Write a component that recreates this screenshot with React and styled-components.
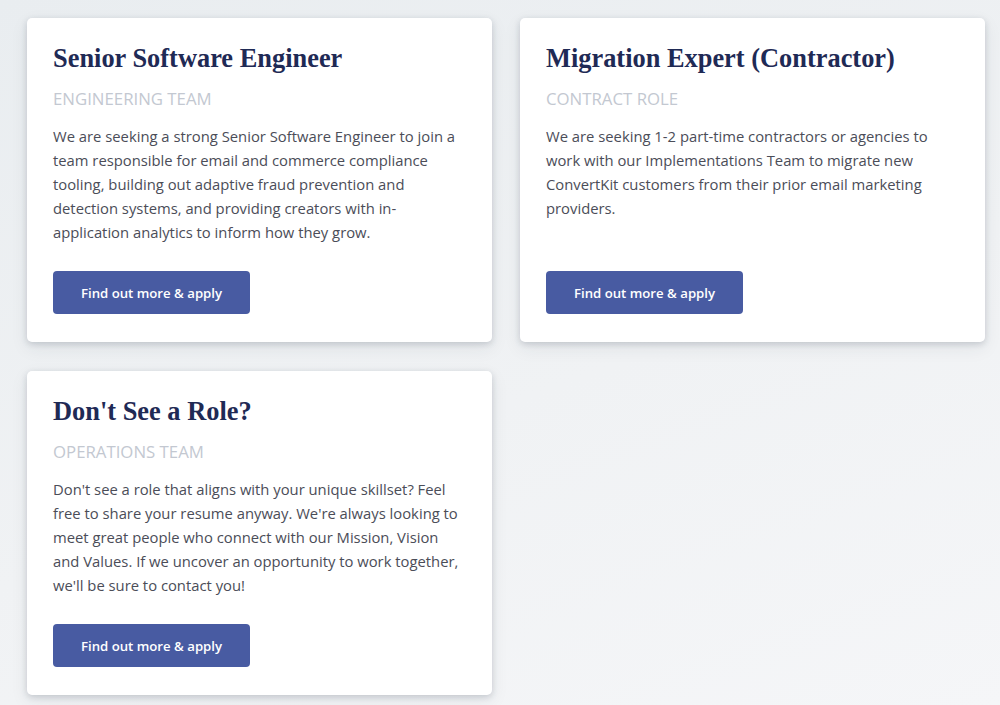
import React from 'react'
import styled, { createGlobalStyle } from 'styled-components'

const GlobalStyle = createGlobalStyle`
  html, body {
    margin: 0;
    padding: 0;
  }
  body {
    background: linear-gradient(160deg, #e9edf0 0%, #f0f2f4 55%, #f5f6f8 100%);
    min-height: 705px;
    font-family: "Open Sans", "Noto Sans", sans-serif;
  }
`

const roles = [
  {
    title: 'Senior Software Engineer',
    team: 'Engineering Team',
    text: 'We are seeking a strong Senior Software Engineer to join a team responsible for email and commerce compliance tooling, building out adaptive fraud prevention and detection systems, and providing creators with in-application analytics to inform how they grow.',
  },
  {
    title: 'Migration Expert (Contractor)',
    team: 'Contract Role',
    text: 'We are seeking 1-2 part-time contractors or agencies to work with our Implementations Team to migrate new ConvertKit customers from their prior email marketing providers.',
  },
  {
    title: "Don't See a Role?",
    team: 'Operations Team',
    text: "Don't see a role that aligns with your unique skillset? Feel free to share your resume anyway. We're always looking to meet great people who connect with our Mission, Vision and Values. If we uncover an opportunity to work together, we'll be sure to contact you!",
  },
]

const App = () => {
  return (
    <>
      <GlobalStyle />
      <Page>
        <Grid>
          {roles.map((role, index) => (
            <Card key={index}>
              <Title>{role.title}</Title>
              <Team>{role.team}</Team>
              <Text>{role.text}</Text>
              <Button href="#">Find out more &amp; apply</Button>
            </Card>
          ))}
        </Grid>
      </Page>
    </>
  )
}

const Page = styled.div`
  padding: 18px 15px 12px 27px;
`
const Grid = styled.div`
  display: grid;
  grid-template-columns: 465px 465px;
  column-gap: 28px;
  row-gap: 29px;
`
const Card = styled.div`
  display: flex;
  flex-direction: column;
  align-items: flex-start;
  background: #fff;
  border-radius: 5px;
  padding: 25px 26px 28px 26px;
  box-shadow: 0 2px 6px rgba(40, 50, 70, 0.18), 0 6px 18px rgba(40, 50, 70, 0.08);
`
const Title = styled.h2`
  margin: 0;
  font-family: "Liberation Serif", "Times New Roman", serif;
  font-size: 26.4px;
  line-height: 30px;
  font-weight: bold;
  color: #1f2a55;
`
const Team = styled.div`
  margin-top: 15px;
  font-size: 16.8px;
  line-height: 22px;
  text-transform: uppercase;
  color: #c3c8d1;
`
const Text = styled.p`
  margin: 14px 0 27px 0;
  max-width: 410px;
  font-size: 14.8px;
  line-height: 24px;
  color: #4b4d58;
`
const Button = styled.a`
  margin-top: auto;
  display: inline-flex;
  align-items: center;
  justify-content: center;
  width: 197px;
  height: 43px;
  box-sizing: border-box;
  background: #485ba2;
  border-radius: 4px;
  color: #fff;
  font-size: 13.2px;
  font-weight: 600;
  text-decoration: none;
`

export default App
